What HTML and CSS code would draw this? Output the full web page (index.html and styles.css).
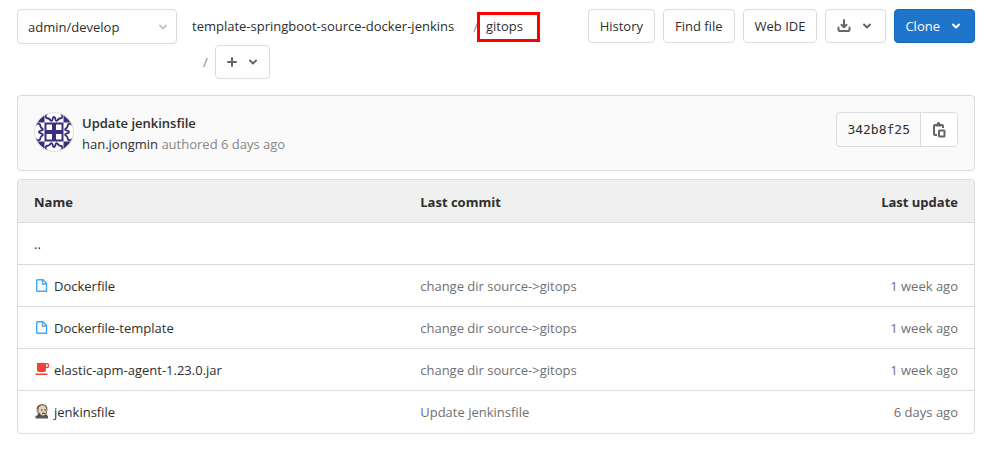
FILE: index.html
```html
<!DOCTYPE html>
<html lang="en">
<head>
<meta charset="utf-8">
<title>gitops · Files</title>
<link rel="stylesheet" href="styles.css">
</head>
<body>
<svg class="defs" aria-hidden="true">
  <symbol id="chevron" viewBox="0 0 16 16"><path d="M5 6.500 8 9.500l3-3" fill="none" stroke="currentColor" stroke-width="2" stroke-linecap="round" stroke-linejoin="round"/></symbol>
  <symbol id="file" viewBox="0 0 16 16"><path d="M3.700 1.700h5.300l3.500 3.500v8.100H3.700a1 1 0 0 1-1-1V2.700a1 1 0 0 1 1-1zM8.500 2v4h4" fill="none" stroke="#42a5f5" stroke-width="1.400"/></symbol>
</svg>
<main class="page">
  <header class="toolbar">
    <div class="ref-picker">
      <select class="ref-select" aria-label="Branch"><option>admin/develop</option></select>
      <svg class="icon ref-chevron" aria-hidden="true"><use href="#chevron"/></svg>
    </div>
    <nav class="breadcrumb" aria-label="Path">
      <a class="crumb crumb-root" href="#">template-springboot-source-docker-jenkins</a>
      <span class="slash">/</span>
      <a class="crumb marked" href="#">gitops</a>
      <span class="add-group">
        <span class="slash">/</span>
        <button class="btn btn-add" type="button" aria-label="Add to tree">
          <svg class="icon" viewBox="0 0 16 16"><path d="M8 4v8M4 8h8" stroke="currentColor" stroke-width="2" stroke-linecap="round"/></svg>
          <svg class="icon"><use href="#chevron"/></svg>
        </button>
      </span>
    </nav>
    <div class="actions">
      <button class="btn" type="button">History</button>
      <button class="btn" type="button">Find file</button>
      <button class="btn" type="button">Web IDE</button>
      <button class="btn btn-icons" type="button" aria-label="Download">
        <svg class="icon" viewBox="0 0 16 16"><path d="M8 2v7M5.500 6.700 8 9.200l2.500-2.500M2.500 9.500V12a1 1 0 0 0 1 1h9a1 1 0 0 0 1-1V9.500" fill="none" stroke="currentColor" stroke-width="2" stroke-linecap="round" stroke-linejoin="round"/></svg>
        <svg class="icon"><use href="#chevron"/></svg>
      </button>
      <button class="btn btn-primary" type="button">Clone <svg class="icon"><use href="#chevron"/></svg></button>
    </div>
  </header>

  <section class="commit">
    <svg class="avatar" viewBox="0 0 40 40" role="img" aria-label="han.jongmin">
      <defs>
        <clipPath id="round"><circle cx="20" cy="20" r="19"/></clipPath>
        <g id="side"><path d="M13 1.500q-2.500 2.500-.5 4.500 3.500.5 4 2.500 1.500 1 2-1 .5-2.500 1.500-2.500t1.500 2.500q.5 2 2 1 .5-2 4-2.500 2-2-.5-4.500" fill="none" stroke="#3b2f7d" stroke-width="1.800" stroke-linejoin="round"/><path d="M2.500 10.500 10.500 2.500v8z" fill="#3b2f7d"/></g>
      </defs>
      <circle cx="20" cy="20" r="19.500" fill="#fff" stroke="#ddd"/>
      <g clip-path="url(#round)">
        <use href="#side"/><use href="#side" transform="rotate(90 20 20)"/><use href="#side" transform="rotate(180 20 20)"/><use href="#side" transform="rotate(270 20 20)"/>
        <path d="M10.500 10.500h19v19h-19z" fill="#3b2f7d"/>
        <path d="M12.500 12.500H18V18h-5.500zM22 12.500h5.500V18H22zM12.500 22H18v5.500h-5.500zM22 22h5.500v5.500H22z" fill="#fff"/>
      </g>
    </svg>
    <div class="commit-text">
      <a class="commit-title" href="#">Update jenkinsfile</a>
      <div class="commit-meta"><a href="#">han.jongmin</a> authored 6 days ago</div>
    </div>
    <div class="sha-group">
      <span class="sha">342b8f25</span>
      <button class="copy" type="button" aria-label="Copy commit SHA">
        <svg class="icon" viewBox="0 0 16 16"><path d="M6 13H4a1 1 0 0 1-1-1V4a1 1 0 0 1 1-1h7a1 1 0 0 1 1 1v2" fill="none" stroke="currentColor" stroke-width="2"/><path d="M4.500 4.500V2h1Q6 0 7.500 0t2 2h1v2.500z" fill="currentColor"/><rect x="8" y="8.500" width="5.500" height="6" rx=".5" fill="none" stroke="currentColor" stroke-width="2"/></svg>
      </button>
    </div>
  </section>

  <table class="files">
    <thead>
      <tr><th class="col-name" scope="col">Name</th><th scope="col">Last commit</th><th class="col-date" scope="col">Last update</th></tr>
    </thead>
    <tbody>
      <tr><td colspan="3"><a href="#">..</a></td></tr>
      <tr>
        <td><a class="file" href="#"><svg class="icon" aria-hidden="true"><use href="#file"/></svg>Dockerfile</a></td>
        <td class="muted">change dir source-&gt;gitops</td><td class="col-date muted">1 week ago</td>
      </tr>
      <tr>
        <td><a class="file" href="#"><svg class="icon" aria-hidden="true"><use href="#file"/></svg>Dockerfile-template</a></td>
        <td class="muted">change dir source-&gt;gitops</td><td class="col-date muted">1 week ago</td>
      </tr>
      <tr>
        <td><a class="file" href="#"><svg class="icon" viewBox="0 0 16 16" aria-hidden="true"><path d="M3 1h10.500A1.500 1.500 0 0 1 15 2.500v2A1.500 1.500 0 0 1 13.500 6H12v2a2 2 0 0 1-2 2H5a2 2 0 0 1-2-2zm9 1.300v2.400h1.600V2.300zM1.500 11.500h12V13h-12z" fill="#f44336" fill-rule="evenodd"/></svg>elastic-apm-agent-1.23.0.jar</a></td>
        <td class="muted">change dir source-&gt;gitops</td><td class="col-date muted">1 week ago</td>
      </tr>
      <tr>
        <td><a class="file" href="#"><svg class="icon" viewBox="0 0 16 16" aria-hidden="true"><path d="M1.500 14.500V12L5 10.500h7l2 1.500v2.500z" fill="#455a64"/><path d="M3 6.500C2 3 4.500.3 8 .3s6 2.200 5.300 6.200L12 12l-4 1-4-2z" fill="#4c4a49"/><path d="M4.500 6.500C4 3 6 1.200 8.500 1.200S13 3.500 12.500 7 11 11.500 9 11.500s-4-2-4.500-5z" fill="#e8cdb4"/><path d="M2.200 6.500 4.500 4l.7 5-1.700.5z" fill="#a99f98"/><path d="M7 6h1.500M10.500 6H12M8 9.300h3.500" stroke="#333" stroke-width="1"/><path d="m6 12 3 1 3-1v2.300l-3-.8-3 .8z" fill="#b33a3a"/></svg>jenkinsfile</a></td>
        <td class="muted">Update jenkinsfile</td><td class="col-date muted">6 days ago</td>
      </tr>
    </tbody>
  </table>
</main>
</body>
</html>
```
FILE: styles.css
```css
* { box-sizing: border-box; }
body {
  margin: 0;
  background: #fff;
  color: #2e2e2e;
  font: 13px/20px "Open Sans", "Noto Sans", sans-serif;
}
a { color: inherit; text-decoration: none; }
.defs { position: absolute; width: 0; height: 0; }
.icon { display: block; flex: none; width: 16px; height: 16px; }
.page { padding: 9px 27px 36px 17px; }

.toolbar { display: flex; align-items: flex-start; margin-bottom: 16px; }
.ref-picker { position: relative; flex: none; width: 160px; }
.ref-select {
  display: block;
  width: 100%;
  height: 35px;
  padding: 0 32px 0 10px;
  border: 1px solid #dbdbdb;
  border-radius: 4px;
  background: #fff;
  color: inherit;
  font: inherit;
  appearance: none;
}
.ref-chevron { position: absolute; top: 10px; right: 6px; color: #c4c4c4; pointer-events: none; }
.breadcrumb {
  display: flex;
  flex: 1;
  flex-wrap: wrap;
  align-items: center;
  min-width: 0;
  padding-left: 15px;
  row-gap: 1px;
}
.crumb { line-height: 35px; }
.crumb-root { margin-right: 8px; }
.slash { padding: 0 2px 0 11px; color: #868686; }
.marked { position: relative; margin-left: 6px; }
.marked::after {
  content: "";
  position: absolute;
  inset: 3px -17px 2px -9px;
  border: 3px solid #f00;
}
.add-group { display: flex; flex-basis: 100%; align-items: center; gap: 5px; }

.btn {
  display: inline-flex;
  align-items: center;
  justify-content: center;
  height: 34px;
  padding: 0 11px;
  border: 1px solid #dbdbdb;
  border-radius: 4px;
  background: #fff;
  color: #2e2e2e;
  font: inherit;
  white-space: nowrap;
}
.btn-add { gap: 5px; width: 55px; padding: 0 8px; color: #666; }
.btn-icons { gap: 7px; padding: 0 10px; color: #666; }
.btn-primary { gap: 8px; padding: 0 10px; border-color: #1068bf; background: #1f75cb; color: #fff; }
.actions { display: flex; flex: none; gap: 8px; }

.commit {
  display: flex;
  align-items: flex-start;
  margin-bottom: 8px;
  padding: 16px 16px 15px;
  border: 1px solid #dbdbdb;
  border-radius: 4px;
  background: #fafafa;
}
.avatar { flex: none; width: 40px; height: 40px; margin-right: 8px; }
.commit-text { flex: 1; padding-top: 1px; line-height: 21px; }
.commit-title { font-weight: 600; }
.commit-meta { color: #868686; }
.commit-meta a { color: #2e2e2e; }
.sha-group {
  display: flex;
  height: 35px;
  border: 1px solid #dbdbdb;
  border-radius: 4px;
  overflow: hidden;
}
.sha { padding: 0 10px; font: 13px/33px "DejaVu Sans Mono", monospace; }
.copy {
  display: flex;
  align-items: center;
  justify-content: center;
  width: 37px;
  padding: 0;
  border: 0;
  border-left: 1px solid #dbdbdb;
  background: #fff;
  color: #666;
}

.files {
  width: 100%;
  border: 1px solid #dbdbdb;
  border-radius: 4px;
  border-spacing: 0;
  table-layout: fixed;
  overflow: hidden;
}
.files th, .files td { height: 42px; padding: 0 16px; border-bottom: 1px solid #dbdbdb; text-align: left; }
.files th { height: 43px; padding-top: 2px; background: #f0f0f0; font-weight: 700; }
.files tbody tr:last-child td { border-bottom: 0; }
.files .col-name { width: 40.4%; }
.files .col-date { text-align: right; }
.files .muted { color: #707070; }
.file { display: flex; align-items: center; gap: 4px; }
```
